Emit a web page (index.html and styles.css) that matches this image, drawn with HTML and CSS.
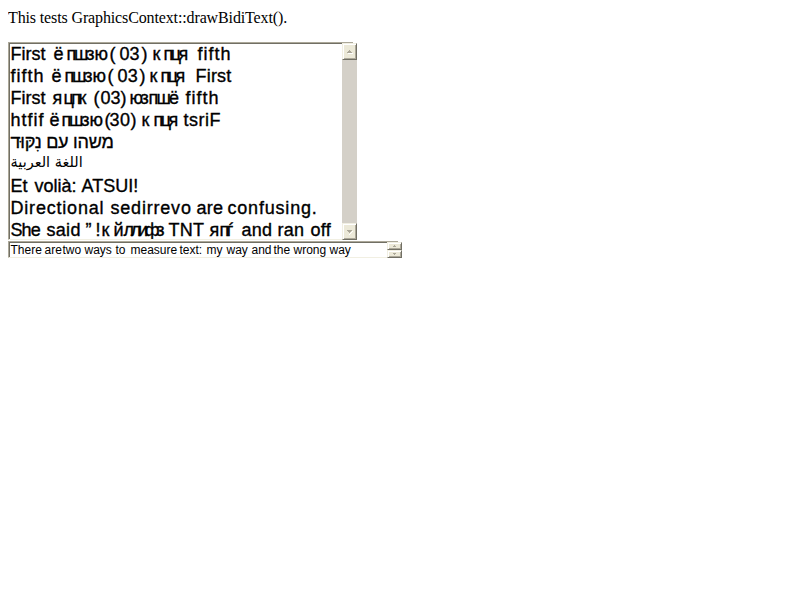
FILE: index.html
```html
<!DOCTYPE html>
<html lang="en">
<head>
<meta charset="utf-8">
<title>drawBidiText</title>
<link rel="stylesheet" href="styles.css">
</head>
<body>
<p class="intro">This tests GraphicsContext::drawBidiText().</p>
<div class="listbox">
<div class="lines">
<div class="line l1"><span>First</span><span>ё</span><span class="tight">пшз</span><span>ю</span><span>(</span><span>03</span><span>)</span><span>к</span><span class="close">пця</span><span class="loose">fifth</span></div>
<div class="line l2"><span class="loose">fifth</span><span>ё</span><span class="tight">пшз</span><span>ю</span><span>(</span><span>03</span><span>)</span><span>к</span><span class="close">пця</span><span>First</span></div>
<div class="line l3"><span>First</span><span>я</span><span class="close">цпк</span><span>(</span><span>03</span><span>)</span><span class="close">юз</span><span class="snug">пшё</span><span class="loose">fifth</span></div>
<div class="line l4"><span class="loose">htfif</span><span>ё</span><span class="tight">пшз</span><span>ю</span><span>(</span><span>30</span><span>)</span><span>к</span><span class="close">пця</span><span>tsriF</span></div>
<div class="line hebrew"><bdi dir="rtl">משהו עם נִקּוּד</bdi></div>
<div class="line arabic"><bdi dir="rtl">اللغة العربية</bdi></div>
<div class="line l7"><span>Et</span><span>volià:</span><span>ATSUI!</span></div>
<div class="line l8"><span class="wide">Directional</span><span class="wide">sedirrevo</span><span>are</span><span class="wide">confusing.</span></div>
<div class="line l9"><span class="she">She</span><span>said</span><span>”</span><span>!</span><span>к</span><span>й</span><span class="crush">ллифз</span><span>TNT</span><span>я</span><span class="close">пѓ</span><span>and</span><span>ran</span><span>off</span></div>
</div>
<div class="scrollbar">
<div class="button up"><svg width="5" height="4" viewBox="0 0 5 4"><path class="shade" d="M1 4h5V3H1z"/><path class="arrow" d="M2 0h1v1h1v1h1v1H0V2h1V1h1z"/></svg></div>
<div class="button down"><svg width="5" height="4" viewBox="0 0 5 4"><path class="shade" d="M2 4h1V3h1V2h1V1h1v1H5v1H4v1H3v1H2z"/><path class="arrow" d="M0 0h5v1H4v1H3v1H2V2H1V1H0z"/></svg></div>
</div>
</div>
<div class="select">
<div class="small"><span>There</span><span>are</span><span>two</span><span>ways</span><span>to</span><span>measure</span><span>text:</span><span>my</span><span>way</span><span>and</span><span>the</span><span>wrong</span><span>way</span></div>
<div class="spinner">
<div class="step"><svg width="3" height="2" viewBox="0 0 3 2"><path class="arrow" d="M1 0h1v1h1v1H0V1h1z"/></svg></div>
<div class="step"><svg width="3" height="2" viewBox="0 0 3 2"><path class="arrow" d="M0 0h3v1H2v1H1V1H0z"/></svg></div>
</div>
</div>
</body>
</html>
```

FILE: styles.css
```css
body { margin: 0 8px; background: #fff; color: #000; }
.intro { margin: 0; padding-top: 8px; height: 34px; font: 16px/20px "Liberation Serif", serif; letter-spacing: -0.13px; }
.listbox { display: flex; width: 349px; height: 198px; }
.lines {
  box-sizing: border-box; width: 334px; height: 198px; overflow: hidden;
  border: solid #aca899; border-width: 1px 0 1px 1px; border-bottom-color: #f1efe2;
  box-shadow: inset 1px 1px #716f64;
  padding: 0 0 0 1.5px;
  font: 18px/22px "Liberation Sans", Arial, sans-serif;
  -webkit-text-stroke: 0.35px #000;
}
.line { display: grid; height: 22px; white-space: pre; justify-content: start; }
.l1 { grid-template-columns: 43px 13px 28px 15px 10px 22px 11px 11px 34px 40px; }
.l2 { grid-template-columns: 41px 13px 28px 15px 10px 22px 10px 11px 35px 40px; letter-spacing: 0.2px; }
.l3 { grid-template-columns: 42px 11px 30px 7px 20px 9px 19px 37px 40px; }
.l4 { grid-template-columns: 39px 12px 28px 15px 5px 21px 11px 12px 30px 40px; letter-spacing: 0.5px; }
.l7 { grid-template-columns: 24px 47px 70px; }
.l8 { grid-template-columns: 100px 86px 31px 100px; letter-spacing: 0.2px; }
.l9 { grid-template-columns: 36px 39px 10px 6px 12px 10px 45px 41px 10px 22px 36px 33px 30px; letter-spacing: 0.3px; }
.l9 .she { letter-spacing: -0.9px; }
.l9 .crush { letter-spacing: -3.3px; }
.line .tight { letter-spacing: -2.2px; }
.line .close { letter-spacing: -2.5px; }
.line .snug { letter-spacing: -1.8px; }
.line .wide { letter-spacing: 0.8px; }
.line .loose { letter-spacing: 1px; }
.hebrew { letter-spacing: -0.25px; }
.arabic { font: 14.5px/19px "DejaVu Sans", sans-serif; -webkit-text-stroke: 0; }
.scrollbar { display: flex; flex-direction: column; justify-content: space-between; width: 15px; background: #d4d0c8; }
.scrollbar::before { content: ""; height: 1px; background: linear-gradient(to right, #aca899 11px, #fff 11px); }
.button, .step {
  box-sizing: border-box; display: flex; align-items: center; justify-content: center;
  background: #ece9d8; border: 1px solid; border-color: #f1efe2 #716f64 #716f64 #f1efe2;
  box-shadow: inset 1px 1px #fff, inset -1px -1px #aca899;
}
.button { height: 17px; }
.up { margin-bottom: auto; }
.arrow { fill: #aca899; }
.shade { fill: #fff; }
svg { display: block; overflow: visible; }
.select { display: flex; width: 394px; height: 17px; margin-top: 1px; }
.small {
  box-sizing: border-box; display: grid; width: 379px; height: 17px;
  grid-template-columns: 34px 18px 22px 31px 15px 49px 27px 20px 25px 22px 20px 36px 30px;
  justify-content: start; white-space: nowrap; padding-left: 1.5px;
  border: solid #aca899; border-width: 1px 0 1px 1px; border-bottom-color: #f1efe2;
  box-shadow: inset 1px 1px #716f64;
  font: 12px/16px "Liberation Sans", Arial, sans-serif;
}
.spinner { display: flex; flex-direction: column; width: 15px; }
.spinner::before { content: ""; height: 1px; background: linear-gradient(to right, #aca899 11px, #fff 11px); }
.step { height: 8px; }
```
